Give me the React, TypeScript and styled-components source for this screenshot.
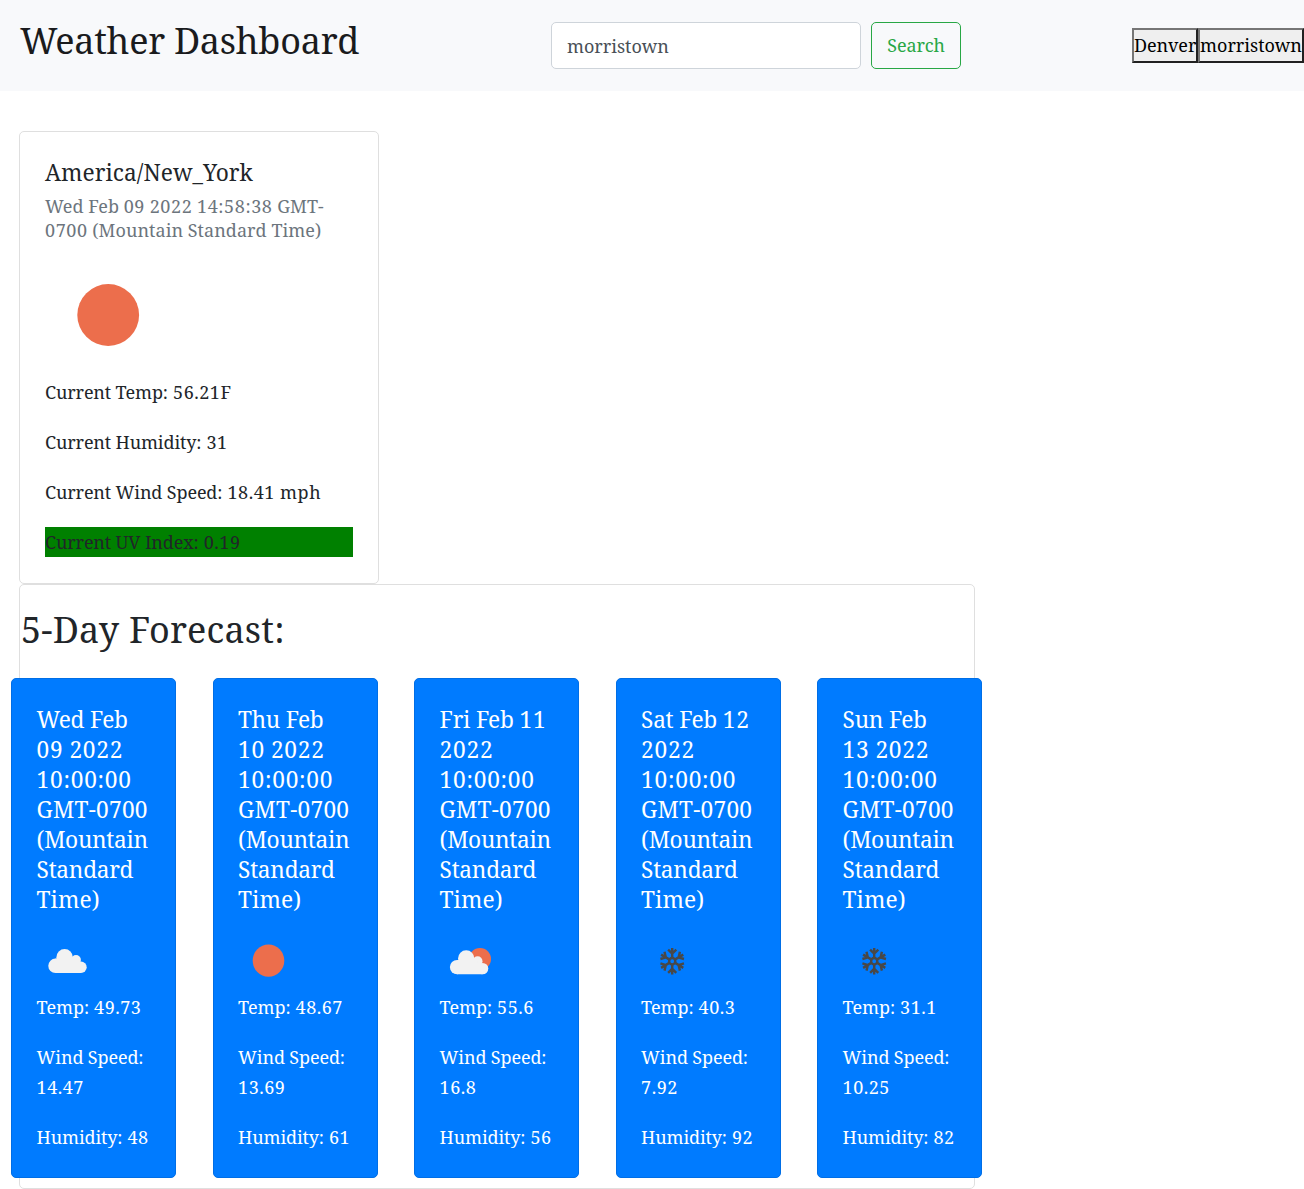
import React from 'react';
import styled, { createGlobalStyle } from 'styled-components';

const GlobalStyle = createGlobalStyle`
  *, *::before, *::after { box-sizing: border-box; }
  body {
    margin: 0;
    background: #fff;
    color: #212529;
    font-family: "Noto Serif", Cambria, Caladea, "Liberation Serif", serif;
    font-size: 18px;
    line-height: 30px;
    overflow-x: hidden;
  }
  h1, h2, h5, h6, p { margin: 0; font-weight: 400; }
`;

type Track = { $track?: number };

const Navbar = styled.nav`
  display: flex;
  align-items: center;
  height: 91px;
  padding-left: 20px;
  background: #f8f9fb;
`;

const Brand = styled.h1`
  width: 531px;
  padding-bottom: 9px;
  color: #1a1b1d;
  font-size: 36px;
  line-height: 60px;
  letter-spacing: -0.28px;
`;

const SearchForm = styled.form`
  display: flex;
  gap: 10px;
`;

const SearchInput = styled.input`
  width: 310px;
  height: 47px;
  padding: 1px 16px 0 15px;
  border: 1px solid #ced4da;
  border-radius: 5px;
  background: #fff;
  color: #495057;
  font: inherit;
  letter-spacing: -0.02px;
`;

const SearchButton = styled.button`
  width: 90px;
  height: 47px;
  padding: 0 0 1px;
  border: 1px solid #28a745;
  border-radius: 5px;
  background: transparent;
  color: #28a745;
  font: inherit;
  letter-spacing: -0.15px;
`;

const History = styled.div`
  display: flex;
  margin-left: auto;
`;

const HistoryButton = styled.button<{ $width: number } & Track>`
  width: ${p => p.$width}px;
  height: 35px;
  padding: 0 0 2px;
  border: 2px solid;
  border-color: #767676 #212121 #212121 #767676;
  background: #efefef;
  color: #000;
  font: inherit;
  letter-spacing: ${p => p.$track ?? 0}px;
  text-align: center;
  white-space: nowrap;
`;

const Main = styled.main`
  padding: 40px 0 0 19px;
`;

const Card = styled.section`
  border: 1px solid #dfdfdf;
  border-radius: 5px;
  background: #fff;
`;

const CurrentCard = styled(Card)`
  width: 360px;
  height: 453px;
  padding: 26px 25px 25px;
`;

const CityTitle = styled.h5`
  font-size: 22.7px;
  line-height: 30px;
  letter-spacing: 0.05px;
`;

const CityDate = styled.h6`
  margin-top: 6px;
  color: #6c757d;
  font-size: 18px;
  line-height: 24px;
`;

const DateLine = styled.span`
  display: block;
  white-space: nowrap;
`;

const CurrentIcon = styled.svg`
  display: block;
  width: 125px;
  height: 125px;
  margin: 10px 0 0;
`;

const Readings = styled.div`
  display: flex;
  flex-direction: column;
  gap: 20px;
`;

const ReadingLine = styled.p<{ $uv?: boolean }>`
  background: ${p => (p.$uv ? '#008000' : 'transparent')};
`;

const ForecastCard = styled(Card)`
  width: 956px;
  height: 605px;
`;

const ForecastTitle = styled.h2`
  padding: 21px 0 24px 1px;
  font-size: 36px;
  line-height: 48px;
  letter-spacing: 0.2px;
`;

const Days = styled.div`
  display: flex;
  justify-content: space-between;
  margin: 0 -8px 0 -9px;
`;

const DayCard = styled.article`
  width: 165px;
  height: 500px;
  padding: 26px 24px 25px 24.6px;
  border: 1px solid #006ee6;
  border-radius: 5px;
  background: #007bff;
  color: #fff;
`;

const DayTitle = styled.h5`
  font-size: 22.7px;
  line-height: 30px;
`;

const Word = styled.span<Track>`
  letter-spacing: ${p => p.$track ?? 0}px;
  white-space: nowrap;
`;

const Measure = styled.span<Track>`
  letter-spacing: ${p => p.$track ?? 0}px;
`;

const DayIcon = styled.svg`
  display: block;
  width: 64px;
  height: 63px;
  margin-top: 14px;
`;

const SUN = '#ec6e4c';
const CLOUD = '#f2f2f2';

type Kind = 'cloud' | 'sun' | 'partly' | 'snow';

const CloudShape = () => (
  <g fill={CLOUD}>
    <circle cx="27.6" cy="28.2" r="8.2" />
    <circle cx="39" cy="30.9" r="4.9" />
    <circle cx="18.5" cy="36.8" r="7.2" />
    <circle cx="44" cy="38.3" r="5.7" />
    <path d="M18.5 29.6h17l8.5 5v9.4h-25.5z" />
  </g>
);

const SnowShape = () => (
  <g
    transform="translate(31.2 32.2) scale(.97 1)"
    fill="none"
    stroke="#484848"
    strokeWidth="2.5"
  >
    <circle r="3.2" />
    {[0, 60, 120, 180, 240, 300].map(a => (
      <path key={a} transform={`rotate(${a})`} d="M0 -3.5V-13.2M-4.2 -11.6L0 -7.6L4.2 -11.6" />
    ))}
  </g>
);

const WeatherIcon = ({ kind }: { kind: Kind }) => (
  <DayIcon viewBox="0 0 64 63">
    {kind === 'cloud' && <CloudShape />}
    {kind === 'sun' && <ellipse cx="30.5" cy="31.6" rx="15.8" ry="16.2" fill={SUN} />}
    {kind === 'partly' && (
      <>
        <circle cx="40" cy="30" r="11" fill={SUN} />
        <g transform="translate(-1.4 1.3)">
          <CloudShape />
        </g>
      </>
    )}
    {kind === 'snow' && <SnowShape />}
  </DayIcon>
);

const Reading = ({ label, value, uv }: { label: string; value: string; uv?: boolean }) => (
  <ReadingLine $uv={uv}>
    <Measure $track={-0.14}>{label}:</Measure>
    <Measure $track={0.52}> {value}</Measure>
  </ReadingLine>
);

const Tracked = ({ text, track }: { text: string; track: (word: string) => number }) => (
  <>
    {text.split(' ').map((word, i) => (
      <React.Fragment key={i}>
        {i > 0 && ' '}
        <Word $track={track(word)}>{word}</Word>
      </React.Fragment>
    ))}
  </>
);

const titleTrack = (word: string) => {
  if (word.startsWith('GMT')) return 0.25;
  if (word === 'Time)') return 0.1;
  return /\d/.test(word) ? 0.75 : -0.3;
};

const dateTrack = (word: string) => (/\d/.test(word) ? 0.6 : 0.04);

const days: { date: string; kind: Kind; temp: string; wind: string; humidity: string }[] = [
  { date: 'Wed Feb 09 2022', kind: 'cloud', temp: '49.73', wind: '14.47', humidity: '48' },
  { date: 'Thu Feb 10 2022', kind: 'sun', temp: '48.67', wind: '13.69', humidity: '61' },
  { date: 'Fri Feb 11 2022', kind: 'partly', temp: '55.6', wind: '16.8', humidity: '56' },
  { date: 'Sat Feb 12 2022', kind: 'snow', temp: '40.3', wind: '7.92', humidity: '92' },
  { date: 'Sun Feb 13 2022', kind: 'snow', temp: '31.1', wind: '10.25', humidity: '82' },
];

export default function App() {
  return (
    <>
      <GlobalStyle />
      <Navbar>
        <Brand>Weather Dashboard</Brand>
        <SearchForm onSubmit={e => e.preventDefault()}>
          <SearchInput defaultValue="morristown" aria-label="City" />
          <SearchButton type="submit">Search</SearchButton>
        </SearchForm>
        <History>
          <HistoryButton $width={66} $track={-0.1}>Denver</HistoryButton>
          <HistoryButton $width={106} $track={-0.02}>morristown</HistoryButton>
        </History>
      </Navbar>
      <Main>
        <CurrentCard>
          <CityTitle>America/New_York</CityTitle>
          <CityDate>
            <DateLine>
              <Tracked text="Wed Feb 09 2022 14:58:38 GMT-" track={dateTrack} />
            </DateLine>
            <DateLine>
              <Tracked text="0700 (Mountain Standard Time)" track={dateTrack} />
            </DateLine>
          </CityDate>
          <CurrentIcon viewBox="0 0 125 125">
            <circle cx="63.2" cy="63" r="30.9" fill={SUN} />
          </CurrentIcon>
          <Readings>
            <Reading label="Current Temp" value="56.21F" />
            <Reading label="Current Humidity" value="31" />
            <Reading label="Current Wind Speed" value="18.41 mph" />
            <Reading label="Current UV Index" value="0.19" uv />
          </Readings>
        </CurrentCard>
        <ForecastCard>
          <ForecastTitle>5-Day Forecast:</ForecastTitle>
          <Days>
            {days.map(day => (
              <DayCard key={day.date}>
                <DayTitle>
                  <Tracked
                    text={`${day.date} 10:00:00 GMT-0700 (Mountain Standard Time)`}
                    track={titleTrack}
                  />
                </DayTitle>
                <WeatherIcon kind={day.kind} />
                <Readings>
                  <Reading label="Temp" value={day.temp} />
                  <Reading label="Wind Speed" value={day.wind} />
                  <Reading label="Humidity" value={day.humidity} />
                </Readings>
              </DayCard>
            ))}
          </Days>
        </ForecastCard>
      </Main>
    </>
  );
}
